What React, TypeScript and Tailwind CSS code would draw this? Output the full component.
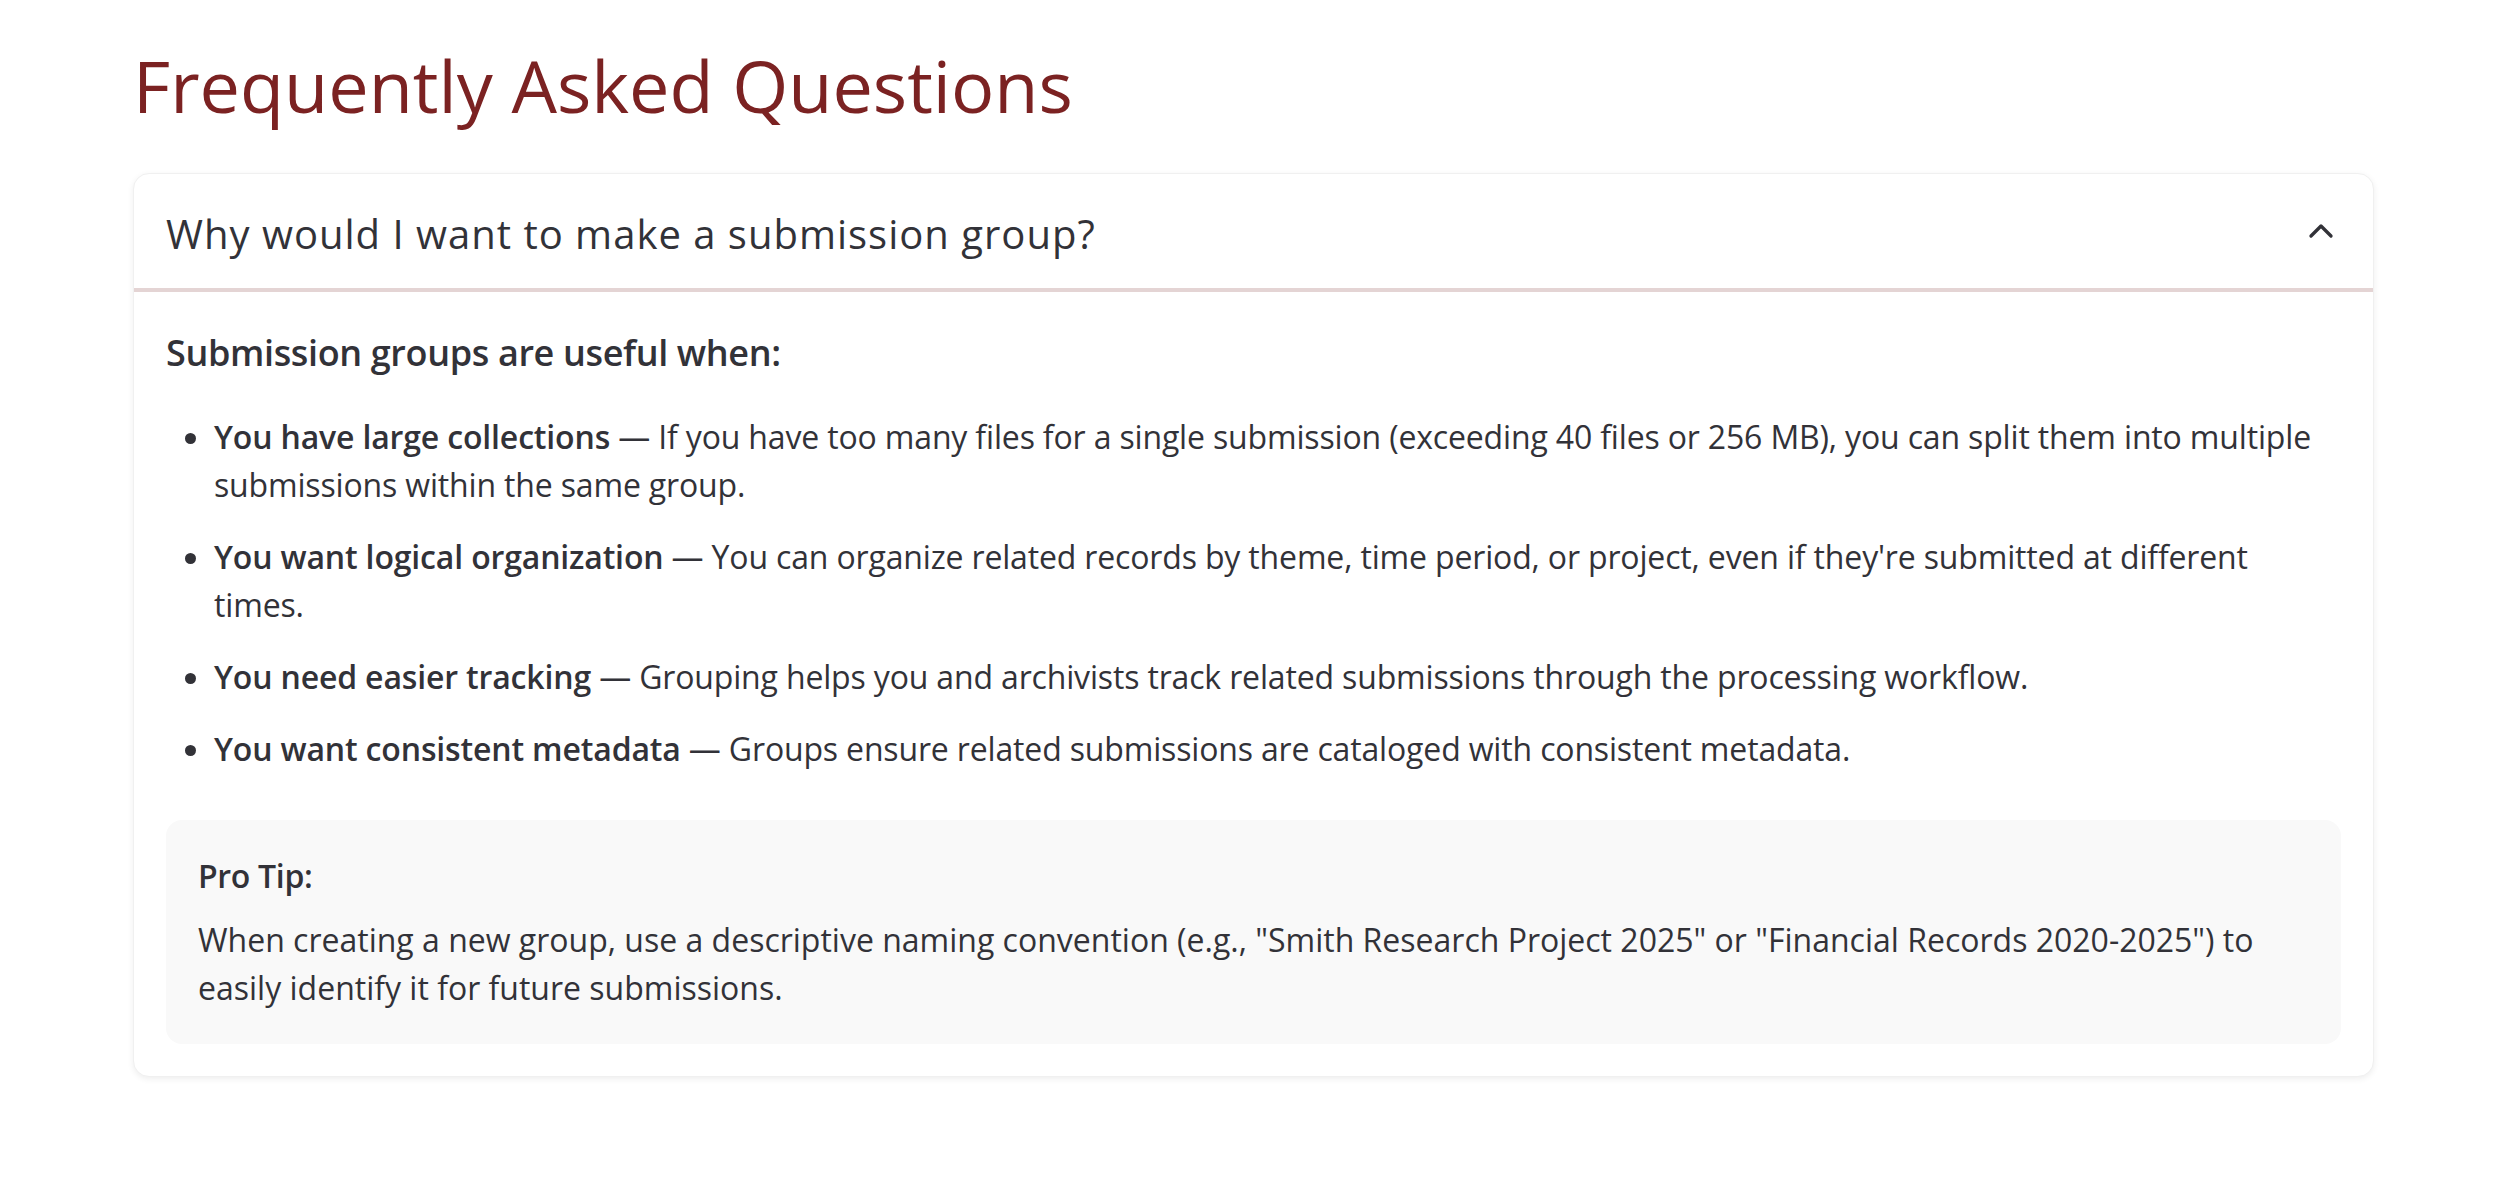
import { ChevronUp } from "lucide-react";

const items = [
  {
    title: "You have large collections",
    body: "If you have too many files for a single submission (exceeding 40 files or 256 MB), you can split them into multiple submissions within the same group.",
  },
  {
    title: "You want logical organization",
    body: "You can organize related records by theme, time period, or project, even if they're submitted at different times.",
  },
  {
    title: "You need easier tracking",
    body: "Grouping helps you and archivists track related submissions through the processing workflow.",
  },
  {
    title: "You want consistent metadata",
    body: "Groups ensure related submissions are cataloged with consistent metadata.",
  },
];

export default function App() {
  return (
    <div className="min-h-screen bg-white font-['Open_Sans','Noto_Sans',sans-serif] text-[#323238]">
      <div className="ml-[133px] w-[2241px] pt-[45px] pb-[100px]">
        <h1 className="mb-[48px] text-[72px] font-normal leading-[80px] text-[#7b2222]">Frequently Asked Questions</h1>

        <section className="rounded-[16px] border border-[#f0f0f0] bg-white shadow-[0_2px_6px_rgba(0,0,0,0.07)]">
          <button className="flex h-[118px] w-full items-center justify-between border-b-4 border-[#e4d4d4] px-[32px] pt-[6px] text-left">
            <span className="text-[40px] leading-[56px] tracking-[0.025em] text-[#323238]">Why would I want to make a submission group?</span>
            <ChevronUp size={40} strokeWidth={2} className="-mt-[6px] text-[#323238]" />
          </button>

          <div className="p-[32px] pt-[33px]">
            <h3 className="mb-[32px] text-[36px] font-semibold leading-[56px] tracking-[-0.01em]">Submission groups are useful when:</h3>
            <ul className="mb-[47px] list-disc space-y-[24px] pl-[48px] text-[32px] leading-[48px] tracking-[-0.005em]">
              {items.map((item) => (
                <li key={item.title}>
                  <strong className="font-semibold">{item.title}</strong> — {item.body}
                </li>
              ))}
            </ul>

            <div className="rounded-[16px] bg-[#f9f9f9] p-[32px] text-[32px] leading-[48px]">
              <p className="mb-[16px] font-semibold tracking-[-0.01em]">Pro Tip:</p>
              <p>
                When creating a new group, use a descriptive naming convention (e.g., "Smith Research Project 2025" or "Financial Records 2020-2025") to easily identify it for future submissions.
              </p>
            </div>
          </div>
        </section>
      </div>
    </div>
  );
}
